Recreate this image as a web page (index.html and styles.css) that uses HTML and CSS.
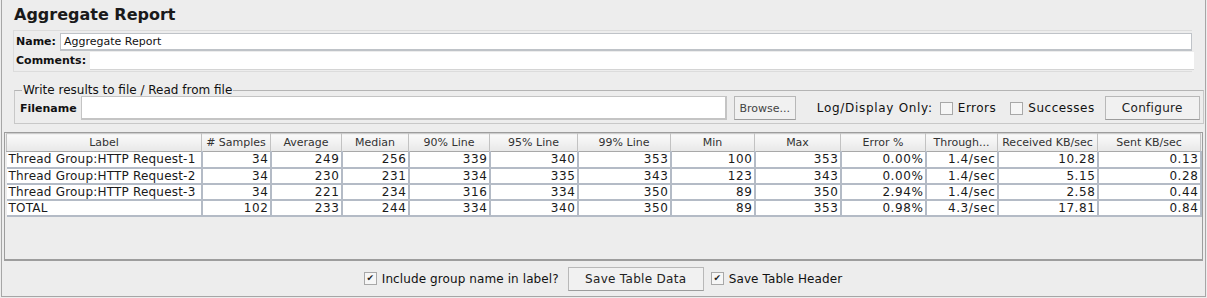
FILE: index.html
```html
<!DOCTYPE html>
<html lang="en">
<head>
    <meta charset="UTF-8">
    <title>Aggregate Report</title>
    <link rel="stylesheet" href="styles.css">
</head>
<body>
    <div class="page">
        <!-- Title -->
        <h1 class="title">Aggregate Report</h1>

        <!-- Name / comments -->
        <div class="name-panel">
            <div class="field-row">
                <label class="field-label">Name:</label>
                <div class="text-input name-input">Aggregate Report</div>
            </div>
            <div class="field-row">
                <label class="field-label">Comments:</label>
                <div class="text-input comments-input"></div>
            </div>
        </div>

        <!-- File panel -->
        <fieldset class="file-panel">
            <legend>Write results to file / Read from file</legend>
            <div class="file-row">
                <span class="field-label">Filename</span>
                <div class="text-input file-input"></div>
                <button class="btn browse">Browse...</button>
                <span class="log-label">Log/Display Only:</span>
                <span class="check"><span class="box"></span>Errors</span>
                <span class="check"><span class="box"></span>Successes</span>
                <button class="btn configure">Configure</button>
            </div>
        </fieldset>

        <!-- Results table -->
        <div class="table-frame">
            <table class="results">
                <colgroup>
                    <col style="width:195px">
                    <col style="width:69px">
                    <col style="width:71px">
                    <col style="width:67px">
                    <col style="width:81px">
                    <col style="width:88px">
                    <col style="width:93px">
                    <col style="width:84px">
                    <col style="width:86px">
                    <col style="width:85px">
                    <col style="width:72px">
                    <col style="width:100px">
                    <col style="width:103px">
                </colgroup>
                <thead>
                    <tr>
                        <th>Label</th>
                        <th># Samples</th>
                        <th>Average</th>
                        <th>Median</th>
                        <th>90% Line</th>
                        <th>95% Line</th>
                        <th>99% Line</th>
                        <th>Min</th>
                        <th>Max</th>
                        <th>Error %</th>
                        <th>Through...</th>
                        <th>Received KB/sec</th>
                        <th>Sent KB/sec</th>
                    </tr>
                </thead>
                <tbody>
                    <tr>
                        <td>Thread Group:HTTP Request-1</td>
                        <td>34</td><td>249</td><td>256</td><td>339</td><td>340</td><td>353</td>
                        <td>100</td><td>353</td><td>0.00%</td><td>1.4/sec</td><td>10.28</td><td>0.13</td>
                    </tr>
                    <tr>
                        <td>Thread Group:HTTP Request-2</td>
                        <td>34</td><td>230</td><td>231</td><td>334</td><td>335</td><td>343</td>
                        <td>123</td><td>343</td><td>0.00%</td><td>1.4/sec</td><td>5.15</td><td>0.28</td>
                    </tr>
                    <tr>
                        <td>Thread Group:HTTP Request-3</td>
                        <td>34</td><td>221</td><td>234</td><td>316</td><td>334</td><td>350</td>
                        <td>89</td><td>350</td><td>2.94%</td><td>1.4/sec</td><td>2.58</td><td>0.44</td>
                    </tr>
                    <tr>
                        <td>TOTAL</td>
                        <td>102</td><td>233</td><td>244</td><td>334</td><td>340</td><td>350</td>
                        <td>89</td><td>353</td><td>0.98%</td><td>4.3/sec</td><td>17.81</td><td>0.84</td>
                    </tr>
                </tbody>
            </table>
        </div>

        <!-- Bottom controls -->
        <div class="bottom-bar">
            <span class="check"><span class="box checked">&#10004;</span>Include group name in label?</span>
            <button class="btn save-data">Save Table Data</button>
            <span class="check"><span class="box checked">&#10004;</span>Save Table Header</span>
        </div>
    </div>
</body>
</html>
```

FILE: styles.css
```css
* {
    margin: 0;
    padding: 0;
    box-sizing: border-box;
}

body {
    font-family: "DejaVu Sans", Verdana, sans-serif;
    font-size: 12px;
    color: #111;
    background: #ededed;
    width: 1207px;
    height: 298px;
    overflow: hidden;
}

.page {
    margin: 0 1px;
    height: 297px;
    border: 1px solid #a6a6a6;
    border-top: none;
    display: flex;
    flex-direction: column;
}

.title {
    font-size: 16px;
    font-weight: bold;
    padding: 5px 0 0 12px;
    height: 30px;
    color: #1a1a1a;
}

.name-panel {
    margin: 0 13px 0 11px;
    border: 1px solid #dcdcdc;
    border-right: none;
    padding: 1px 0 1px 2px;
}

.field-row {
    display: flex;
    align-items: center;
    height: 19px;
}

.field-label {
    font-weight: bold;
    font-size: 11px;
    padding-right: 4px;
    white-space: nowrap;
}

.text-input {
    flex: 1;
    background: #fff;
    height: 18px;
    line-height: 16px;
    font-size: 11px;
    padding-left: 3px;
}

.name-input {
    border: 1px solid #bfc3c8;
    border-bottom-width: 2px;
}

.comments-input {
    border-bottom: 1px solid #d4d4d4;
    margin-right: -2px;
}

.file-panel {
    margin: 12px 16px 0 12px;
    border: 1px solid #c8c8c8;
    border-top-color: #b4b4b4;
    padding: 0 3px 3px 5px;
    height: 40px;
}

.file-panel legend {
    font-size: 12px;
    padding: 0 1px 0 1px;
    margin-left: 2px;
    line-height: 12px;
}

.file-row {
    display: flex;
    align-items: center;
    height: 24px;
}

.file-row > * {
    flex: none;
    white-space: nowrap;
}

.file-input {
    width: 646px;
    height: 24px;
    border: 1px solid #c4c4c4;
    border-bottom-width: 2px;
    border-right-width: 2px;
}

.btn {
    font-family: inherit;
    font-size: 12px;
    color: #222;
    background: #f1f1f1;
    border: 1px solid #b8b8b8;
    border-bottom-color: #9c9c9c;
    height: 24px;
}

.browse {
    width: 62px;
    margin-left: 7px;
    font-size: 11px;
    color: #444;
}

.log-label {
    margin-left: 21px;
    margin-right: 7px;
    letter-spacing: 0.7px;
}

.check {
    display: inline-flex;
    align-items: center;
    margin-right: 14px;
    letter-spacing: 0.5px;
    white-space: nowrap;
}

.box {
    width: 13px;
    height: 13px;
    border: 1px solid #a8a8a8;
    background: #f6f6f6;
    margin-right: 5px;
    display: inline-flex;
    align-items: center;
    justify-content: center;
    font-size: 9px;
    line-height: 1;
    color: #222;
    letter-spacing: 0;
}

.configure {
    width: 95px;
    margin-left: -4px;
    font-size: 12px;
    letter-spacing: 0.3px;
}

.table-frame {
    margin: 8px 2px 0 2px;
    height: 129px;
    border: 1px solid #9d9d9d;
    border-bottom-width: 2px;
    padding: 0 1px;
}

.results {
    border-collapse: collapse;
    table-layout: fixed;
    width: 1194px;
    font-size: 11px;
}

.results th {
    font-weight: normal;
    font-size: 11px;
    color: #333;
    height: 18px;
    background: linear-gradient(#fafafa, #e8e8e8);
    border-right: 1px solid #c2c2c2;
    border-bottom: 1px solid #a8a8a8;
    border-top: 1px solid #cdcdcd;
    white-space: nowrap;
    overflow: hidden;
}

.results th:first-child {
    border-left: 1px solid #c2c2c2;
}

.results td {
    background: #fff;
    height: 16px;
    text-align: right;
    padding: 0 1px 0 2px;
    border-right: 2px solid #b4bbc6;
    border-bottom: 2px solid #b4bbc6;
    letter-spacing: 0.6px;
    white-space: nowrap;
    font-size: 12px;
    line-height: 14px;
    color: #1a1a1a;
}

.results td:first-child {
    text-align: left;
    letter-spacing: 0.2px;
}

.bottom-bar {
    flex: 1;
    display: flex;
    align-items: center;
    justify-content: center;
    font-size: 12px;
    padding-left: 8px;
}

.bottom-bar .check {
    margin-right: 9px;
    letter-spacing: 0.1px;
}

.save-data {
    width: 136px;
    margin-right: 7px;
    letter-spacing: 0.3px;
}
```
